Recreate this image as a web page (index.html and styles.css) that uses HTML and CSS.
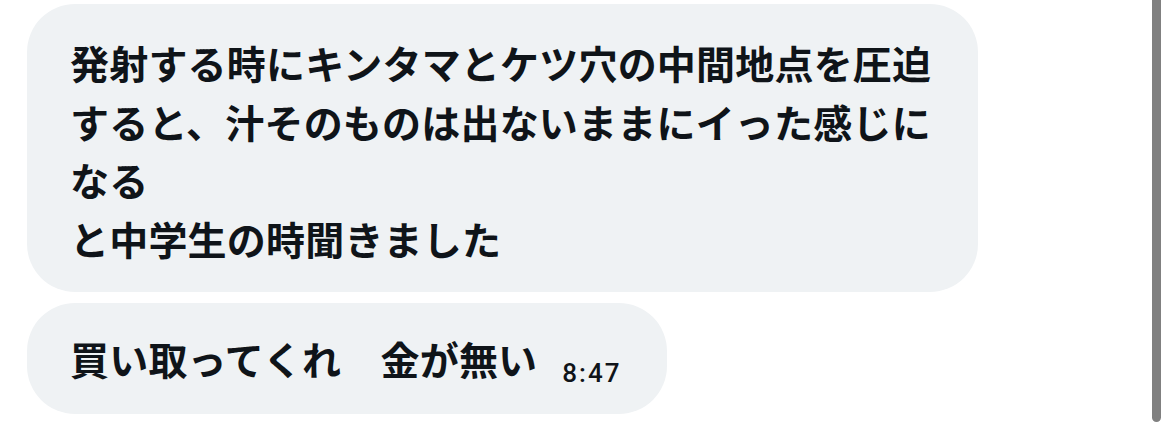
FILE: index.html
```html
<!DOCTYPE html>
<html lang="ja">
<head>
<meta charset="utf-8">
<link rel="stylesheet" href="styles.css">
</head>
<body>
<div class="thread">
  <div class="bubble bubble-long">
    <p class="msg">発射する時にキンタマとケツ穴の中間地点を圧迫<br>すると、汁そのものは出ないままにイった感じに<br>なる<br>と中学生の時聞きました</p>
  </div>
  <div class="bubble bubble-short">
    <p class="msg">買い取ってくれ　金が無い</p>
    <span class="time">8:47</span>
  </div>
</div>
<div class="scrollbar"></div>
</body>
</html>
```

FILE: styles.css
```css
html, body {
  margin: 0;
  padding: 0;
  background: #ffffff;
  width: 1170px;
  height: 439px;
  overflow: hidden;
}
.thread {
  display: flex;
  flex-direction: column;
  align-items: flex-start;
  gap: 11px;
  padding: 4px 0 0 27px;
}
.bubble {
  background: #eff2f4;
  border-radius: 48px;
  color: #0f1419;
  font-family: "Noto Sans CJK JP", "Noto Sans", sans-serif;
  font-weight: 700;
  font-size: 39px;
}
.msg {
  margin: 0;
  white-space: nowrap;
  letter-spacing: 0.2px;
}
.bubble-long {
  width: 865px;
  padding: 29px 43px 24px 43px;
}
.bubble-long .msg {
  line-height: 58.7px;
}
.bubble-short {
  display: flex;
  height: 111px;
  box-sizing: border-box;
  padding: 0 46px 0 43px;
  align-items: center;
}
.bubble-short .msg {
  line-height: 111px;
}
.time {
  font-family: "Roboto", "Liberation Sans", sans-serif;
  font-weight: 500;
  font-size: 26px;
  margin-left: 25px;
  margin-top: 30px;
  letter-spacing: 2px;
}
.scrollbar {
  position: absolute;
  top: 0;
  left: 1152px;
  width: 9px;
  height: 422px;
  background: #808080;
  border-radius: 0 0 5px 5px;
}
```
